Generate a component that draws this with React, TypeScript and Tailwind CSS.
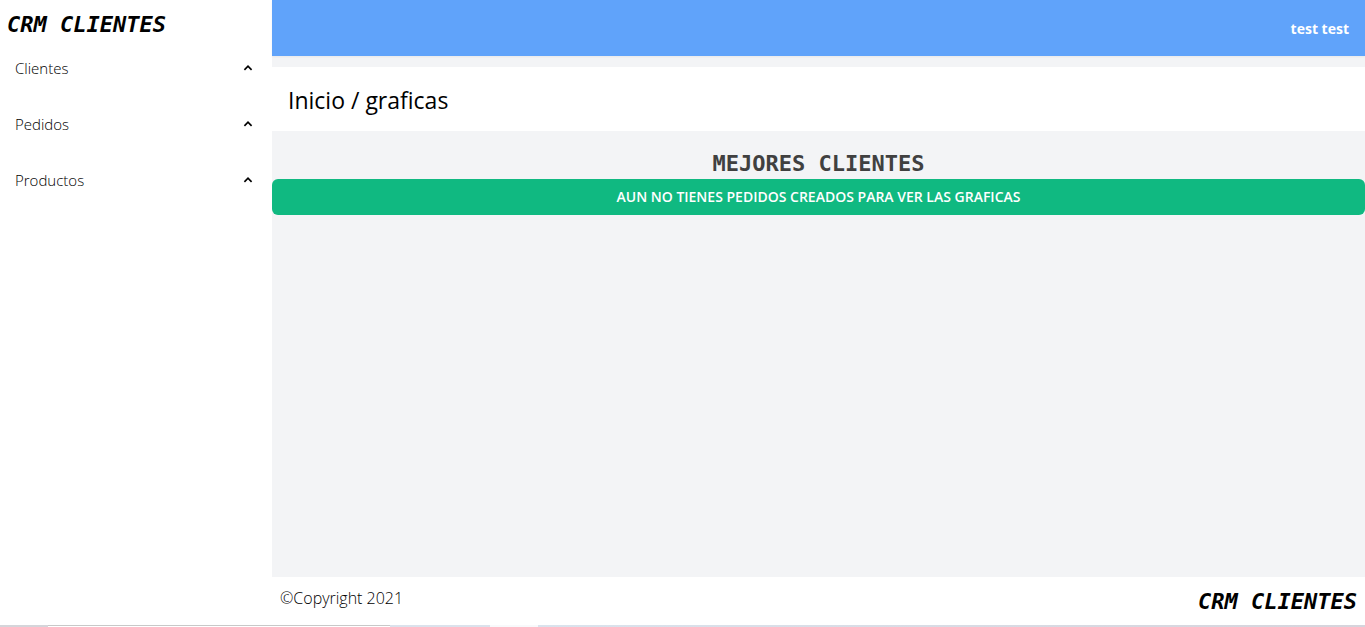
import React from "react";

const sections = ["Clientes", "Pedidos", "Productos"];

function Brand() {
  return (
    <span className="font-['DejaVu_Sans_Mono',monospace] text-[22px] leading-8 font-bold text-black italic">
      CRM CLIENTES
    </span>
  );
}

function Caret() {
  return (
    <svg viewBox="0 0 10 10" className="size-[10px]" fill="none" stroke="black" strokeWidth="1.7" aria-hidden="true">
      <path d="M1.4 6.8 5 3.2l3.6 3.6" />
    </svg>
  );
}

function Sidebar() {
  return (
    <aside className="w-68 shrink-0 bg-white">
      <h1 className="flex px-[7px] pt-[9px]">
        <Brand />
      </h1>
      <nav>
        <ul>
          {sections.map((name) => (
            <li key={name} className="h-14">
              <button
                type="button"
                className="flex h-14 w-full items-center justify-between pr-[19px] pb-[2px] pl-[15px] text-[15px] leading-6 font-light"
              >
                <span>{name}</span>
                <Caret />
              </button>
            </li>
          ))}
        </ul>
      </nav>
    </aside>
  );
}

function BottomStrip() {
  return (
    <div className="flex h-[2px] shrink-0" aria-hidden="true">
      <div className="w-12 bg-[#d5d5da]" />
      <div className="w-[342px] border-t border-[#c8c8c8] bg-white" />
      <div className="w-[100px] bg-[#dbe2ec]" />
      <div className="w-12 bg-[#f8f9fb]" />
      <div className="grow bg-linear-to-r from-[#dae3ed] to-[#d6d4dc]" />
    </div>
  );
}

export default function App() {
  return (
    <div className="flex min-h-screen flex-col bg-white font-['Open_Sans','Noto_Sans',sans-serif] text-black">
      <div className="flex grow">
        <Sidebar />
        <div className="flex min-w-0 grow flex-col bg-gray-100">
          <header className="flex h-14 items-center justify-end bg-[#60a3fa] px-4 text-[14px] font-bold text-white shadow-xs">
            <span>test test</span>
          </header>
          <div className="mt-[11px] flex h-16 items-center bg-white px-4 pt-[2px]">
            <h2 className="text-[23px] leading-8">Inicio / graficas</h2>
          </div>
          <main className="grow pt-[17px] text-center">
            <h3 className="font-['DejaVu_Sans_Mono',monospace] text-[22px] leading-[31px] font-bold text-[#404040]">
              MEJORES CLIENTES
            </h3>
            <p className="rounded-md bg-[#10b981] py-2 text-[14px] leading-5 font-semibold text-white">
              AUN NO TIENES PEDIDOS CREADOS PARA VER LAS GRAFICAS
            </p>
          </main>
          <footer className="flex h-12 items-start justify-between bg-white px-2 pt-[9px]">
            <span className="text-[16px] leading-6 font-light">©Copyright 2021</span>
            <Brand />
          </footer>
        </div>
      </div>
      <BottomStrip />
    </div>
  );
}
